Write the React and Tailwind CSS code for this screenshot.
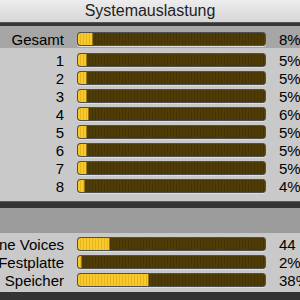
import React from 'react';

const cpuRows = [
  { label: '1', value: 5 },
  { label: '2', value: 5 },
  { label: '3', value: 5 },
  { label: '4', value: 6 },
  { label: '5', value: 5 },
  { label: '6', value: 5 },
  { label: '7', value: 5 },
  { label: '8', value: 4 },
];

const otherRows = [
  { label: 'Online Voices', value: 17, text: '44' },
  { label: 'Festplatte', value: 2, text: '2%' },
  { label: 'Speicher', value: 38, text: '38%' },
];

function Meter({ value }) {
  return (
    <div className="relative h-[14px] w-[189px] shrink-0 overflow-hidden rounded-[3px] border border-[#505050] bg-[repeating-linear-gradient(90deg,#4f3c07_0px,#4f3c07_2px,#443305_2px,#443305_3px)] shadow-[0_1px_0_#dedede]">
      <div
        className="h-full rounded-l-[2px] border-r border-[#9a7608] bg-[repeating-linear-gradient(90deg,#f7c92c_0px,#f7c92c_2px,#e6b61c_2px,#e6b61c_3px)]"
        style={{ width: `${value}%` }}
      />
    </div>
  );
}

function Row({ label, value, text }) {
  return (
    <div className="flex h-[14px] items-center">
      <div className="flex w-[64px] shrink-0 justify-end whitespace-nowrap text-[15px] leading-none text-black">
        {label}
      </div>
      <div className="ml-[13px]">
        <Meter value={value} />
      </div>
      <div className="ml-[13px] whitespace-nowrap text-[15px] leading-none text-black">{text}</div>
    </div>
  );
}

export default function App() {
  return (
    <div className="h-[300px] w-[300px] overflow-hidden bg-[#c9c9c9] font-['Liberation_Sans',Arial,sans-serif]">
      {/* title */}
      <div className="flex h-[22px] items-center justify-center bg-gradient-to-b from-[#ededed] to-[#d6d6d6] text-[16px] text-[#1e1e1e]">
        Systemauslastung
      </div>
      <div className="h-[4px] border-t border-[#555] bg-[#363636]" />

      {/* total */}
      <div className="h-[22px] bg-[#a6a6a6] pt-[6px]">
        <Row label="Gesamt" value={8} text="8%" />
      </div>

      {/* cores */}
      <div className="flex flex-col gap-[4px] pt-[5px] pb-[8px]">
        {cpuRows.map((r) => (
          <Row key={r.label} label={r.label} value={r.value} text={`${r.value}%`} />
        ))}
      </div>

      <div className="h-[7px] border-t border-[#5a5a5a] bg-[#353535]" />
      <div className="h-[25px] bg-[#9b9b9b]" />

      {/* voices / disk / memory */}
      <div className="flex flex-col gap-[4px] pt-[4px] pb-[5px]">
        {otherRows.map((r) => (
          <Row key={r.label} label={r.label} value={r.value} text={r.text} />
        ))}
      </div>
      <div className="h-[8px] bg-[#333]" />
    </div>
  );
}
